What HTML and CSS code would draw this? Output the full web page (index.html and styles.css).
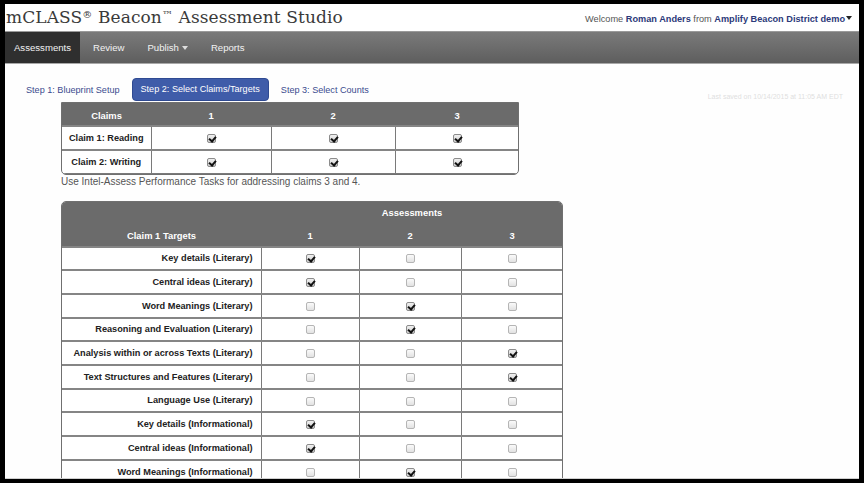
FILE: index.html
```html
<!DOCTYPE html>
<html>
<head>
<meta charset="utf-8">
<link rel="stylesheet" href="styles.css">
</head>
<body>
<div class="frame">
  <header class="top">
    <div class="brand">mCLASS<sup>®</sup> Beacon<sup class="tm">™</sup> Assessment Studio</div>
    <div class="welcome">Welcome <b>Roman Anders</b> from <b>Amplify Beacon District demo</b><span class="caret"></span></div>
  </header>
  <nav class="nav">
    <a class="nav-item active">Assessments</a>
    <a class="nav-item first">Review</a>
    <a class="nav-item">Publish <span class="caret light"></span></a>
    <a class="nav-item">Reports</a>
  </nav>
  <main class="main">
    <div class="steps">
      <span class="step">Step 1: Blueprint Setup</span>
      <span class="step current">Step 2: Select Claims/Targets</span>
      <span class="step">Step 3: Select Counts</span>
      <span class="saved">Last saved on 10/14/2015 at 11:05 AM EDT</span>
    </div>
    <div class="tbl claims">
      <table>
        <colgroup><col class="c0"><col class="c1"><col class="c2"><col class="c3"></colgroup>
        <thead><tr><th>Claims</th><th>1</th><th>2</th><th>3</th></tr></thead>
        <tbody>
          <tr><td class="lbl-c">Claim 1: Reading</td><td><span class="cb on"></span></td><td><span class="cb on"></span></td><td><span class="cb on"></span></td></tr>
          <tr><td class="lbl-c">Claim 2: Writing</td><td><span class="cb on"></span></td><td><span class="cb on"></span></td><td><span class="cb on"></span></td></tr>
        </tbody>
      </table>
    </div>
    <p class="note">Use Intel-Assess Performance Tasks for addressing claims 3 and 4.</p>
    <div class="tbl targets">
      <table>
        <colgroup><col class="t0"><col class="t1"><col class="t2"><col class="t3"></colgroup>
        <thead>
          <tr class="h1"><th></th><th colspan="3">Assessments</th></tr>
          <tr class="h2"><th>Claim 1 Targets</th><th>1</th><th>2</th><th>3</th></tr>
        </thead>
        <tbody>
          <tr><td class="lbl">Key details (Literary)</td><td><span class="cb on"></span></td><td><span class="cb"></span></td><td><span class="cb"></span></td></tr>
          <tr><td class="lbl">Central ideas (Literary)</td><td><span class="cb on"></span></td><td><span class="cb"></span></td><td><span class="cb"></span></td></tr>
          <tr><td class="lbl">Word Meanings (Literary)</td><td><span class="cb"></span></td><td><span class="cb on"></span></td><td><span class="cb"></span></td></tr>
          <tr><td class="lbl">Reasoning and Evaluation (Literary)</td><td><span class="cb"></span></td><td><span class="cb on"></span></td><td><span class="cb"></span></td></tr>
          <tr><td class="lbl">Analysis within or across Texts (Literary)</td><td><span class="cb"></span></td><td><span class="cb"></span></td><td><span class="cb on"></span></td></tr>
          <tr><td class="lbl">Text Structures and Features (Literary)</td><td><span class="cb"></span></td><td><span class="cb"></span></td><td><span class="cb on"></span></td></tr>
          <tr><td class="lbl">Language Use (Literary)</td><td><span class="cb"></span></td><td><span class="cb"></span></td><td><span class="cb"></span></td></tr>
          <tr><td class="lbl">Key details (Informational)</td><td><span class="cb on"></span></td><td><span class="cb"></span></td><td><span class="cb"></span></td></tr>
          <tr><td class="lbl">Central ideas (Informational)</td><td><span class="cb on"></span></td><td><span class="cb"></span></td><td><span class="cb"></span></td></tr>
          <tr><td class="lbl">Word Meanings (Informational)</td><td><span class="cb"></span></td><td><span class="cb on"></span></td><td><span class="cb"></span></td></tr>
        </tbody>
      </table>
    </div>
  </main>
</div>
</body>
</html>
```
FILE: styles.css
```css
* { box-sizing: border-box; }
html, body { margin: 0; padding: 0; background: #000; }
body { font-family: "Liberation Sans", Arial, sans-serif; }
.frame {
  margin: 4px 5px 0 5px;
  width: 854px;
  height: 475px;
  overflow: hidden;
  background: #fefefe;
  display: flex;
  flex-direction: column;
  border-bottom: 1px solid #d0d0d0;
}
.top {
  height: 27px;
  flex: none;
  display: flex;
  align-items: center;
  justify-content: space-between;
  padding: 0 7px 0 1px;
  background: #fff;
}
.brand {
  font-family: "DejaVu Serif", serif;
  font-size: 17px;
  color: #3a3a3a;
  letter-spacing: 0.1px;
  line-height: 27px;
  white-space: nowrap;
}
.brand sup { font-size: 10px; vertical-align: 5px; line-height: 0; }
.brand sup.tm { font-size: 11px; vertical-align: 4px; }
.welcome {
  font-size: 9.2px;
  color: #555;
  white-space: nowrap;
  padding-top: 2px;
}
.welcome b { color: #2c3a7a; }
.caret {
  display: inline-block;
  width: 0; height: 0;
  border-left: 3.5px solid transparent;
  border-right: 3.5px solid transparent;
  border-top: 4px solid #222;
  vertical-align: 2px;
  margin-left: 1px;
}
.caret.light { border-top-color: #ddd; margin-left: 3px; }
.nav {
  height: 33px;
  flex: none;
  display: flex;
  background: linear-gradient(#7a7a7a, #5e5e5e);
  border-top: 1px solid #9a9a9a;
  border-bottom: 1px solid #a8a8a8;
}
.nav-item {
  display: flex;
  align-items: center;
  padding: 0 11.5px;
  font-size: 9.6px;
  color: #f2f2f2;
}
.nav-item.active {
  background: #2f2f2f;
  justify-content: center;
  padding: 0;
  width: 75px;
}
.nav-item.first { padding-left: 13px; }
.main { padding: 14px 0 0 0; }
.steps {
  display: flex;
  align-items: center;
  height: 23px;
  padding-left: 21px;
}
.step {
  font-size: 9.1px;
  color: #3b4b8e;
  margin-right: 12px;
  white-space: nowrap;
}
.step.current {
  background: #3f5ca9;
  color: #fff;
  height: 23px;
  border-radius: 4px;
  padding: 0 8px;
  margin-right: 12px;
  border: 1px solid #2f4a92;
  line-height: 21px;
}
.saved {
  margin-left: auto;
  margin-right: 16px;
  align-self: flex-end;
  font-size: 7px;
  color: #dedede;
  line-height: 8px;
  white-space: nowrap;
}
.tbl {
  margin-left: 56px;
  border: 1px solid #707070;
  overflow: hidden;
  background: #fff;
}
.tbl table {
  border-collapse: collapse;
  width: 100%;
  table-layout: fixed;
}
.claims { width: 458px; border-radius: 0 0 5px 5px; margin-top: 1px; }
.targets { width: 502px; border-radius: 5px 5px 0 0; }
.c0 { width: 89px; } .c1 { width: 120px; } .c2 { width: 124px; } .c3 { width: 124px; }
.t0 { width: 199px; } .t1 { width: 98px; } .t2 { width: 102px; } .t3 { width: 102px; }
th {
  background: #6b6b6b;
  color: #fff;
  font-size: 9.4px;
  font-weight: bold;
  height: 23px;
  padding: 0;
  text-align: center;
}
.claims th { padding-top: 2px; }
.targets .h1 th { height: 22px; }
.targets .h2 th { height: 23px; padding-top: 2px; }
td {
  height: 23.7px;
  padding: 0;
  text-align: center;
  font-size: 9.2px;
  font-weight: bold;
  color: #222;
  border: 1px solid #7a7a7a;
  border-top: 2px solid #858585;
}
tr td:first-child { border-left: none; }
tr td:last-child { border-right: none; }
.claims td { height: 23.5px; }
td.lbl { text-align: right; padding-right: 8px; }
td.lbl-c { text-align: center; }
.note {
  margin: 0 0 12px 56px;
  font-size: 10px;
  color: #555;
  height: 14px;
  line-height: 14px;
}
.cb {
  display: inline-block;
  width: 9px;
  height: 9px;
  border: 1px solid #b5b5b5;
  border-radius: 2px;
  background: linear-gradient(#fafafa, #e2e2e2);
  vertical-align: middle;
  position: relative;
}
.cb.on {
  border-color: #8c8c8c;
  background: linear-gradient(#f0f0f0, #cfcfcf);
}
.cb.on::after {
  content: "";
  position: absolute;
  left: 2px;
  top: 0px;
  width: 3px;
  height: 5px;
  border-right: 2px solid #111;
  border-bottom: 2px solid #111;
  transform: rotate(40deg);
}
```
